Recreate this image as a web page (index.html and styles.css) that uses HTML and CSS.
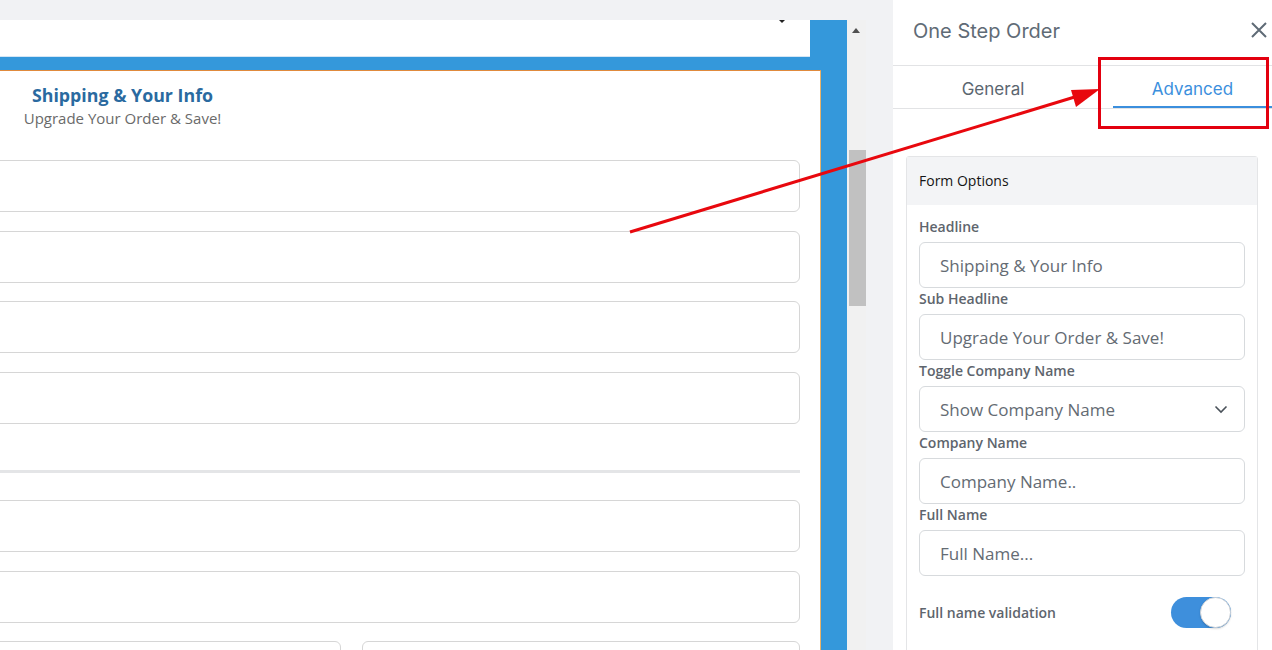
FILE: index.html
```html
<!DOCTYPE html>
<html lang="en">
<head>
<meta charset="utf-8">
<title>One Step Order</title>
<link rel="stylesheet" href="styles.css">
</head>
<body>
<div class="app">
  <div class="editor">
    <div class="topbox"><span class="caret"></span></div>
    <div class="card">
      <div class="card-head">
        <div class="card-title">Shipping &amp; Your Info</div>
        <div class="card-sub">Upgrade Your Order &amp; Save!</div>
      </div>
      <div class="field"></div>
      <div class="field"></div>
      <div class="field"></div>
      <div class="field"></div>
      <div class="sep"></div>
      <div class="field"></div>
      <div class="field"></div>
      <div class="field-row">
        <div class="field half-a"></div>
        <div class="field half-b"></div>
      </div>
    </div>
  </div>
  <div class="scrollbar">
    <span class="scroll-up"></span>
    <span class="scroll-thumb"></span>
  </div>
  <div class="panel">
    <div class="panel-head">
      <span class="panel-title">One Step Order</span>
      <svg class="close" width="16" height="16" viewBox="0 0 16 16"><path d="M1 1 L15 15 M15 1 L1 15" stroke="#5f6b76" stroke-width="2" fill="none"/></svg>
    </div>
    <div class="tabs">
      <div class="tab">General</div>
      <div class="tab active">Advanced</div>
    </div>
    <div class="opts">
      <div class="opts-head">Form Options</div>
      <div class="opts-body">
        <label class="lbl">Headline</label>
        <div class="inp">Shipping &amp; Your Info</div>
        <label class="lbl">Sub Headline</label>
        <div class="inp">Upgrade Your Order &amp; Save!</div>
        <label class="lbl">Toggle Company Name</label>
        <div class="inp select">Show Company Name
          <svg class="chev" width="14" height="9" viewBox="0 0 14 9"><path d="M1.5 1.5 L7 7 L12.5 1.5" stroke="#4a525a" stroke-width="1.6" fill="none"/></svg>
        </div>
        <label class="lbl">Company Name</label>
        <div class="inp">Company Name..</div>
        <label class="lbl">Full Name</label>
        <div class="inp">Full Name...</div>
        <div class="toggle-row">
          <span class="lbl-inline">Full name validation</span>
          <span class="switch"><span class="knob"></span></span>
        </div>
      </div>
    </div>
  </div>
</div>
<svg class="annot" width="1272" height="650" viewBox="0 0 1272 650">
  <line x1="630" y1="232" x2="1078" y2="96" stroke="#e8080e" stroke-width="3"/>
  <polygon points="1100,89 1071,90 1076,107" fill="#e8080e"/>
  <rect x="1099.5" y="58.5" width="168" height="69" fill="none" stroke="#e3000f" stroke-width="3"/>
</svg>
</body>
</html>
```
FILE: styles.css
```css
html, body {
  margin: 0;
  padding: 0;
}
body {
  width: 1272px;
  height: 650px;
  overflow: hidden;
  background: #f1f2f4;
  font-family: "Open Sans", "Liberation Sans", sans-serif;
  position: relative;
}
.app {
  display: flex;
  height: 650px;
  overflow: hidden;
}
.editor {
  width: 847px;
  margin-top: 20px;
  background: #3498db;
  display: flex;
  flex-direction: column;
  overflow: hidden;
}
.topbox {
  width: 810px;
  height: 36px;
  background: #fff;
  border-bottom: 1px solid #d4e6f5;
  position: relative;
  flex: none;
}
.caret {
  position: absolute;
  left: 779px;
  top: 0;
  width: 0;
  height: 0;
  border-left: 3px solid transparent;
  border-right: 3px solid transparent;
  border-top: 3px solid #222;
}
.card {
  margin-top: 13px;
  width: 800px;
  flex: 1;
  background: #fff;
  border-top: 1px solid #e08a3c;
  border-right: 1px solid #e9b36a;
  padding: 12px 20px 0 0;
  overflow: hidden;
}
.card-head {
  width: 245px;
  text-align: center;
}
.card-title {
  font-size: 17.8px;
  font-weight: 700;
  color: #2a6aa0;
  line-height: 24px;
}
.card-sub {
  font-size: 15px;
  color: #6a6a6a;
  line-height: 22px;
}
.field {
  height: 50px;
  margin-left: -20px;
  border: 1px solid #d6d6d6;
  border-radius: 6px;
  margin-top: 18.7px;
}
.card-head + .field {
  margin-top: 31px;
}
.sep {
  height: 3px;
  background: #e4e5e7;
  margin-top: 46px;
  margin-bottom: 27px;
}
.sep + .field {
  margin-top: 27px;
}
.field-row {
  display: flex;
  gap: 21px;
  margin-top: 18.7px;
}
.field-row .field {
  margin-top: 0;
}
.half-a {
  width: 359px;
  flex: none;
}
.half-b {
  flex: 1;
  margin-left: 0 !important;
}
.scrollbar {
  width: 19px;
  margin-top: 20px;
  background: #f1f1f1;
  position: relative;
  flex: none;
}
.scroll-up {
  position: absolute;
  left: 5px;
  top: 8px;
  width: 0;
  height: 0;
  border-left: 4px solid transparent;
  border-right: 4px solid transparent;
  border-bottom: 5px solid #505050;
}
.scroll-thumb {
  position: absolute;
  left: 2px;
  top: 130px;
  width: 17px;
  height: 156px;
  background: #c1c1c1;
}
.panel {
  margin-left: 27px;
  width: 379px;
  background: #fff;
  flex: none;
  font-family: Inter, "Liberation Sans", sans-serif;
}
.panel-head {
  border-bottom: 1px solid #e2e3e5;
  display: flex;
  align-items: center;
  justify-content: space-between;
  padding: 0 5px 6px 20px;
  box-sizing: border-box;
  height: 66px;
}
.panel-title {
  font-size: 20px;
  color: #5f6b76;
  padding-top: 3px;
}
.close {
  display: block;
}
.tabs {
  display: flex;
  height: 42px;
  border-bottom: 1px solid #e2e3e5;
}
.tab {
  width: 200px;
  margin-right: 20px;
  font-size: 17px;
  color: #5b6670;
  text-align: center;
  line-height: 46px;
}
.tab.active {
  flex: 1;
  width: auto;
  margin-right: 0;
  color: #3b8fdd;
  border-bottom: 2px solid #3b8fdd;
  height: 40px;
}
.opts {
  margin: 47px 14px 0 13px;
  border: 1px solid #e4e5e7;
  border-radius: 3px;
  font-family: "Open Sans", "Liberation Sans", sans-serif;
  height: 600px;
}
.opts-head {
  height: 48px;
  background: #f3f4f6;
  padding-left: 12px;
  font-size: 14px;
  color: #151515;
  line-height: 48px;
}
.opts-body {
  padding: 11px 12px 0 12px;
}
.lbl {
  display: block;
  font-size: 14px;
  font-weight: 600;
  color: #5e656d;
  line-height: 20px;
  margin: 1px 0 5px;
}
.inp {
  height: 44px;
  border: 1px solid #d7dadd;
  border-radius: 6px;
  padding-left: 20px;
  font-size: 17px;
  color: #646b73;
  line-height: 45px;
  position: relative;
}
.chev {
  position: absolute;
  right: 16px;
  top: 18px;
}
.toggle-row {
  display: flex;
  align-items: center;
  justify-content: space-between;
  margin-top: 21px;
  height: 31px;
}
.lbl-inline {
  font-size: 14px;
  font-weight: 600;
  color: #5e656d;
}
.switch {
  width: 60px;
  height: 31px;
  border-radius: 16px;
  background: #3e8fdc;
  position: relative;
  margin-right: 14px;
}
.knob {
  position: absolute;
  right: 0;
  top: 0;
  width: 29px;
  height: 29px;
  border-radius: 50%;
  background: #fff;
  border: 1px solid #cfd3d8;
  box-shadow: 0 1px 2px rgba(0,0,0,0.15);
}
.annot {
  position: absolute;
  left: 0;
  top: 0;
  pointer-events: none;
}
```
